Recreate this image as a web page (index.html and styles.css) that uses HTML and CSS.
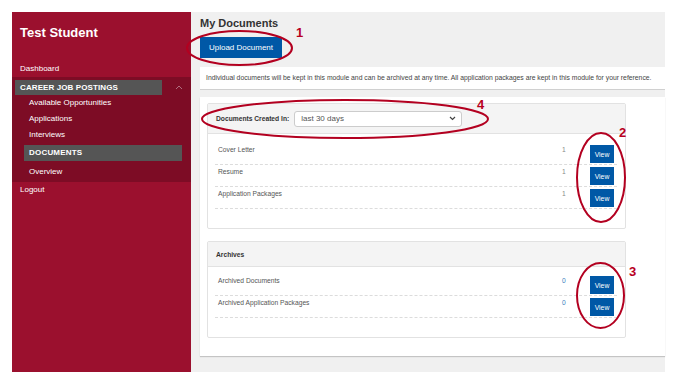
FILE: index.html
```html
<!DOCTYPE html>
<html>
<head>
<meta charset="utf-8">
<link rel="stylesheet" href="styles.css">
</head>
<body>
<div class="app">
  <nav class="sidebar">
    <div class="user">Test Student</div>
    <a class="nav-item">Dashboard</a>
    <div class="submenu">
      <div class="group-head"><span class="group-title">CAREER JOB POSTINGS</span>
        <svg class="chev" width="8" height="5" viewBox="0 0 8 5"><polyline points="1,4 4,1 7,4" fill="none" stroke="#b07080" stroke-width="1"/></svg>
      </div>
      <a class="sub-item">Available Opportunities</a>
      <a class="sub-item">Applications</a>
      <a class="sub-item">Interviews</a>
      <a class="sub-item active">DOCUMENTS</a>
      <a class="sub-item">Overview</a>
    </div>
    <a class="nav-item">Logout</a>
  </nav>
  <main class="main">
    <h1 class="title">My Documents</h1>
    <button class="btn-upload">Upload Document</button>
    <div class="info">Individual documents will be kept in this module and can be archived at any time. All application packages are kept in this module for your reference.</div>
    <div class="card">
      <section class="panel">
        <div class="panel-head tall">
          <span class="filter-label">Documents Created In:</span>
          <div class="select"><span>last 30 days</span>
            <svg width="7" height="5" viewBox="0 0 7 5"><polyline points="1,1 3.5,3.5 6,1" fill="none" stroke="#444" stroke-width="1.2"/></svg>
          </div>
        </div>
        <div class="panel-body">
          <div class="row"><span class="label">Cover Letter</span><span class="count">1</span><button class="btn-view">View</button></div>
          <div class="row"><span class="label">Resume</span><span class="count">1</span><button class="btn-view">View</button></div>
          <div class="row"><span class="label">Application Packages</span><span class="count">1</span><button class="btn-view">View</button></div>
        </div>
      </section>
      <section class="panel">
        <div class="panel-head"><span class="filter-label">Archives</span></div>
        <div class="panel-body short">
          <div class="row"><span class="label">Archived Documents</span><span class="count zero">0</span><button class="btn-view">View</button></div>
          <div class="row"><span class="label">Archived Application Packages</span><span class="count zero">0</span><button class="btn-view">View</button></div>
        </div>
      </section>
    </div>
  </main>
</div>
<svg class="annotations" width="687" height="381" viewBox="0 0 687 381">
  <g fill="none" stroke="#b30020" stroke-width="2">
    <ellipse cx="239.5" cy="48" rx="52.5" ry="17"/>
    <ellipse cx="601" cy="177.5" rx="24" ry="44.5"/>
    <ellipse cx="600.5" cy="295.5" rx="23.5" ry="32.5"/>
    <ellipse cx="345" cy="119" rx="143" ry="19"/>
  </g>
  <g class="ann-num">
    <text x="296" y="37">1</text>
    <text x="619" y="137">2</text>
    <text x="629" y="276">3</text>
    <text x="477" y="109">4</text>
  </g>
</svg>
</body>
</html>
```
FILE: styles.css
```css
* { box-sizing: border-box; }
html, body { margin: 0; padding: 0; background: #fff; }
body { font-family: "Liberation Sans", Arial, sans-serif; position: relative; width: 687px; height: 381px; overflow: hidden; }

.app { display: flex; margin: 12px 22px 9px 12px; height: 360px; }

.sidebar { width: 179px; flex: none; background: #9b102e; color: #fff; display: flex; flex-direction: column; padding-top: 13px; }
.user { font-size: 13px; font-weight: bold; line-height: 16px; padding-left: 8px; margin-bottom: 20px; }
.nav-item { display: block; font-size: 8px; line-height: 16px; height: 16px; padding-left: 8px; color: #fff; }
.submenu { background: #7d0c25; padding: 3px 0 2px; }
.group-head { display: flex; align-items: center; height: 15px; }
.group-title { width: 147px; height: 15px; margin-left: 3px; background: #555; font-size: 8px; font-weight: bold; line-height: 15px; padding-left: 5px; letter-spacing: 0.1px; }
.chev { margin-left: 13px; }
.sub-item { display: block; font-size: 8px; line-height: 16px; height: 16px; padding-left: 17px; color: #fff; }
.sub-item.active { background: #555; font-weight: bold; margin: 2px 9px 3px 12px; padding-left: 5px; letter-spacing: 0.2px; }

.main { flex: 1; background: #f0f0f0; padding: 4px 0 0 9px; display: flex; flex-direction: column; align-items: flex-start; }
.title { margin: 0; font-size: 11px; line-height: 14px; font-weight: bold; color: #333; }
.btn-upload { margin-top: 7px; width: 82px; height: 21px; border: none; background: #0058a6; color: #fff; font-family: inherit; font-size: 8px; padding: 0; }
.info { align-self: stretch; margin-top: 9px; height: 23px; background: #fff; border-bottom: 1px solid #d0d0d0; font-size: 6.8px; color: #444; line-height: 22px; padding-left: 6px; white-space: nowrap; }

.card { align-self: stretch; margin-top: 7px; background: #fff; padding: 6px 0 18px 7px; box-shadow: 0 1px 1px rgba(0,0,0,0.18); display: flex; flex-direction: column; gap: 12px; }
.panel { width: 419px; border: 1px solid #e2e2e2; border-radius: 2px; background: #fff; }
.panel-head { background: #f4f4f4; border-bottom: 1px solid #e2e2e2; height: 25px; display: flex; align-items: center; padding-left: 8px; }
.panel-head.tall { height: 30px; }
.filter-label { font-size: 6.7px; font-weight: bold; color: #333; }
.select { margin-left: 5px; width: 168px; height: 16px; background: #fff; border: 1px solid #ccc; border-radius: 3px; display: flex; align-items: center; justify-content: space-between; padding: 0 5px 0 6px; font-size: 8px; color: #555; }

.panel-body { padding: 9px 8px 19px 7px; }
.panel-body.short { padding-top: 7px; }
.row { display: flex; align-items: flex-start; height: 22px; border-bottom: 1px dashed #dcdcdc; }
.label { flex: 1; font-size: 6.7px; line-height: 14px; color: #555; padding-left: 3px; }
.count { font-size: 6.7px; line-height: 14px; color: #888; width: 4px; }
.count.zero { color: #3d7fc0; }
.btn-view { margin: 2px 3px 0 24px; width: 24px; height: 18px; border: none; background: #0058a6; color: #fff; font-family: inherit; font-size: 6.8px; padding: 0; }

.annotations { position: absolute; left: 0; top: 0; pointer-events: none; }
.ann-num text { font-family: "Liberation Sans", Arial, sans-serif; font-size: 13px; font-weight: bold; fill: #b8001e; }
```
